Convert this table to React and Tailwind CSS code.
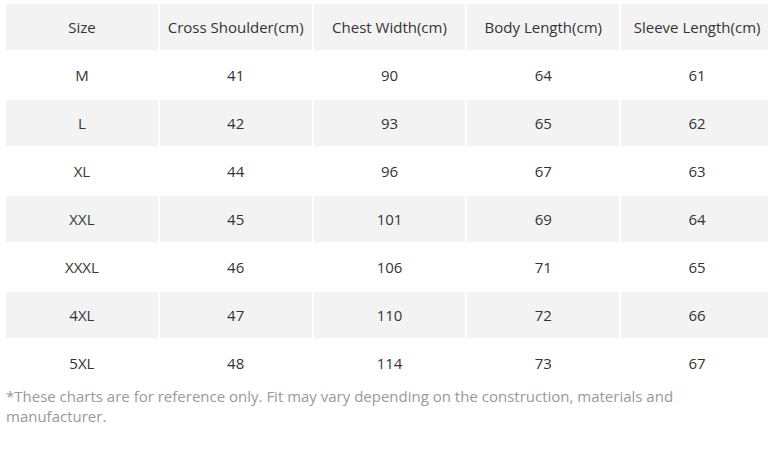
import React from "react";

const headers = ["Size", "Cross Shoulder(cm)", "Chest Width(cm)", "Body Length(cm)", "Sleeve Length(cm)"];
const rows = [
  ["M", "41", "90", "64", "61"],
  ["L", "42", "93", "65", "62"],
  ["XL", "44", "96", "67", "63"],
  ["XXL", "45", "101", "69", "64"],
  ["XXXL", "46", "106", "71", "65"],
  ["4XL", "47", "110", "72", "66"],
  ["5XL", "48", "114", "73", "67"],
];

export default function App() {
  return (
    <div className="w-[768px] h-[459px] overflow-hidden bg-white pl-[4px] pt-[2px]" style={{ fontFamily: '"Open Sans", sans-serif' }}>
      <table className="border-separate border-spacing-[2px] w-[771px] table-fixed text-[15px] text-[#333]">
        <tbody>
          <tr>
            {headers.map((h) => (
              <td key={h} className="bg-[#f3f3f3] h-[46px] text-center align-middle">{h}</td>
            ))}
          </tr>
          {rows.map((r, i) => (
            <tr key={r[0]}>
              {r.map((c, j) => (
                <td key={j} className={`h-[46px] text-center align-middle ${i % 2 === 1 ? "bg-[#f3f3f3]" : "bg-white"}`}>{c}</td>
              ))}
            </tr>
          ))}
        </tbody>
      </table>
      <p className="pl-[2px] pr-[90px] -mt-[2px] text-[15px] leading-[20px] text-[#999]">
        *These charts are for reference only. Fit may vary depending on the construction, materials and manufacturer.
      </p>
    </div>
  );
}
